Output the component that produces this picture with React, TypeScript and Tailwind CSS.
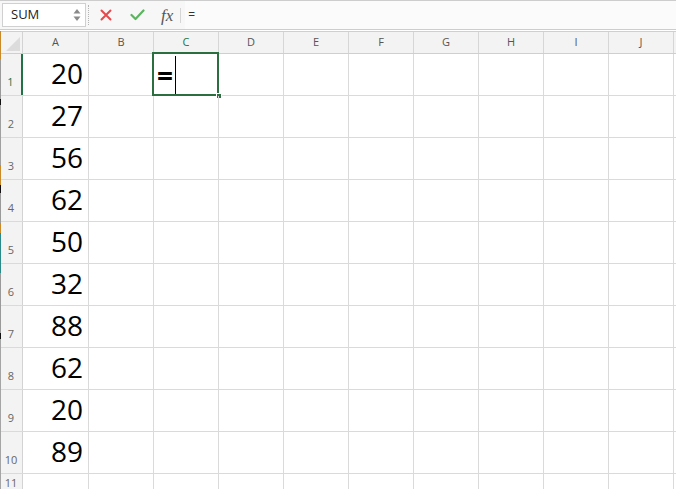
import React from "react";

const cols = ["A", "B", "C", "D", "E", "F", "G", "H", "I", "J"];
const widths = ["w-[66px]", "w-[65px]", "w-[65px]", "w-[65px]", "w-[65px]", "w-[65px]", "w-[65px]", "w-[65px]", "w-[65px]", "w-[65px]"];
const values = [20, 27, 56, 62, 50, 32, 88, 62, 20, 89];

function Toolbar() {
  return (
    <div className="h-[30px] border-t border-b border-[#cdcdcd] bg-[#f7f7f7] flex items-stretch">
      <div className="ml-[2px] mt-[2px] mb-[2px] w-[84px] bg-white border border-[#d0d0d0] flex items-center justify-between">
        <span className="pl-[8px] text-[13px] text-[#222] font-['Open_Sans',sans-serif]">SUM</span>
        <svg width="8" height="14" viewBox="0 0 8 14" className="mr-[4px]">
          <path d="M4 1 L7.5 5.5 H0.5 Z" fill="#8a8a8a" />
          <path d="M4 13 L7.5 8.5 H0.5 Z" fill="#8a8a8a" />
        </svg>
      </div>
      <div className="w-[1px] my-[4px] ml-[2px] border-l border-dotted border-[#b5b5b5]" />
      <div className="flex items-center">
        <svg width="12" height="12" viewBox="0 0 12 12" className="ml-[11px]">
          <path d="M1.5 1.5 L10.5 10.5 M10.5 1.5 L1.5 10.5" stroke="#e5484d" strokeWidth="2" strokeLinecap="round" />
        </svg>
        <svg width="15" height="12" viewBox="0 0 15 12" className="ml-[18px]">
          <path d="M1.5 6 L5.5 10 L13.5 1.5" stroke="#5ab55e" strokeWidth="2.2" fill="none" strokeLinecap="round" strokeLinejoin="round" />
        </svg>
        <span className="ml-[16px] text-[17px] italic text-[#555] font-['Liberation_Serif',serif] leading-none">fx</span>
        <div className="ml-[7px] w-[1px] h-[15px] bg-[#d5d5d5]" />
      </div>
      <div className="flex-1 flex items-center bg-[#fbfbfb] ml-[4px]">
        <span className="pl-[3px] text-[12px] text-[#333] font-['Open_Sans',sans-serif]">=</span>
      </div>
    </div>
  );
}

function HeaderRow() {
  return (
    <div className="flex h-[23px] border-t border-b border-[#cfcfcf] bg-[#f3f3f3] mt-[1px]">
      <div className="w-[23px] shrink-0 border-r border-[#d3d3d3] relative">
        <svg width="14" height="14" viewBox="0 0 14 14" className="absolute right-[2px] bottom-[2px]">
          <path d="M14 0 L14 14 L0 14 Z" fill="#dcdcdc" />
        </svg>
      </div>
      {cols.map((c, i) => (
        <div
          key={c}
          className={`${widths[i]} shrink-0 border-r border-[#d6d6d6] flex items-center justify-center text-[11px] font-['Open_Sans',sans-serif] ${
            c === "C" ? "text-[#217346]" : "text-[#555]"
          }`}
        >
          {c}
        </div>
      ))}
      <div className="flex-1" />
    </div>
  );
}

function Row({ n, value }: { n: number; value?: number }) {
  const active = n === 1;
  return (
    <div className="flex h-[42px] border-b border-[#dadada]">
      <div
        className={`w-[23px] shrink-0 bg-[#f3f3f3] flex items-end justify-center pb-[5px] text-[11px] font-['Open_Sans',sans-serif] ${
          active ? "text-[#217346] border-r-2 border-[#217346]" : "text-[#666] border-r border-[#d3d3d3]"
        }`}
      >
        {n}
      </div>
      {cols.map((c, i) => (
        <div key={c} className={`${widths[i]} shrink-0 border-r border-[#dadada] relative`}>
          {c === "A" && value !== undefined && (
            <div className="text-right pr-[5px] pt-[5px] text-[28px] leading-[28px] font-medium text-black font-['Open_Sans',sans-serif]">
              {value}
            </div>
          )}
          {c === "C" && active && (
            <>
              <div className="absolute left-[-2px] top-[-2px] w-[67px] h-[44px] border-2 border-[#2b6e3f]" />
              <div className="absolute right-[-4px] bottom-[-4px] w-[6px] h-[6px] bg-[#2b6e3f] border border-white" />
              <div className="flex items-center h-full pl-[3px]">
                <span className="text-[28px] leading-[28px] font-bold text-black font-['Open_Sans',sans-serif]">=</span>
                <div className="ml-[2px] w-[1px] h-[38px] bg-black" />
              </div>
            </>
          )}
        </div>
      ))}
      <div className="flex-1" />
    </div>
  );
}

export default function App() {
  return (
    <div className="w-[676px] h-[489px] bg-white overflow-hidden relative font-['Open_Sans',sans-serif]">
      <Toolbar />
      <HeaderRow />
      {values.map((v, i) => (
        <Row key={i} n={i + 1} value={v} />
      ))}
      <div className="flex h-[20px]">
        <div className="w-[23px] shrink-0 bg-[#f3f3f3] border-r border-[#d3d3d3] flex items-start justify-center pt-[1px] text-[11px] text-[#666]">
          11
        </div>
        {cols.map((c, i) => (
          <div key={c} className={`${widths[i]} shrink-0 border-r border-[#dadada]`} />
        ))}
      </div>
      <div className="absolute left-0 top-[31px] w-[1px] h-[458px] flex flex-col">
        <div className="h-[28px] bg-[#c98a2a]" />
        <div className="h-[40px] bg-[#9a9a9a]" />
        <div className="h-[6px] bg-[#111]" />
        <div className="h-[60px] bg-[#a0a0a0]" />
        <div className="h-[20px] bg-[#c98a2a]" />
        <div className="h-[8px] bg-[#111]" />
        <div className="h-[30px] bg-[#9a9a9a]" />
        <div className="h-[10px] bg-[#c98a2a]" />
        <div className="h-[40px] bg-[#2a8a8a]" />
        <div className="h-[60px] bg-[#9a9a9a]" />
        <div className="h-[6px] bg-[#111]" />
        <div className="flex-1 bg-[#a5a5a5]" />
      </div>
    </div>
  );
}
